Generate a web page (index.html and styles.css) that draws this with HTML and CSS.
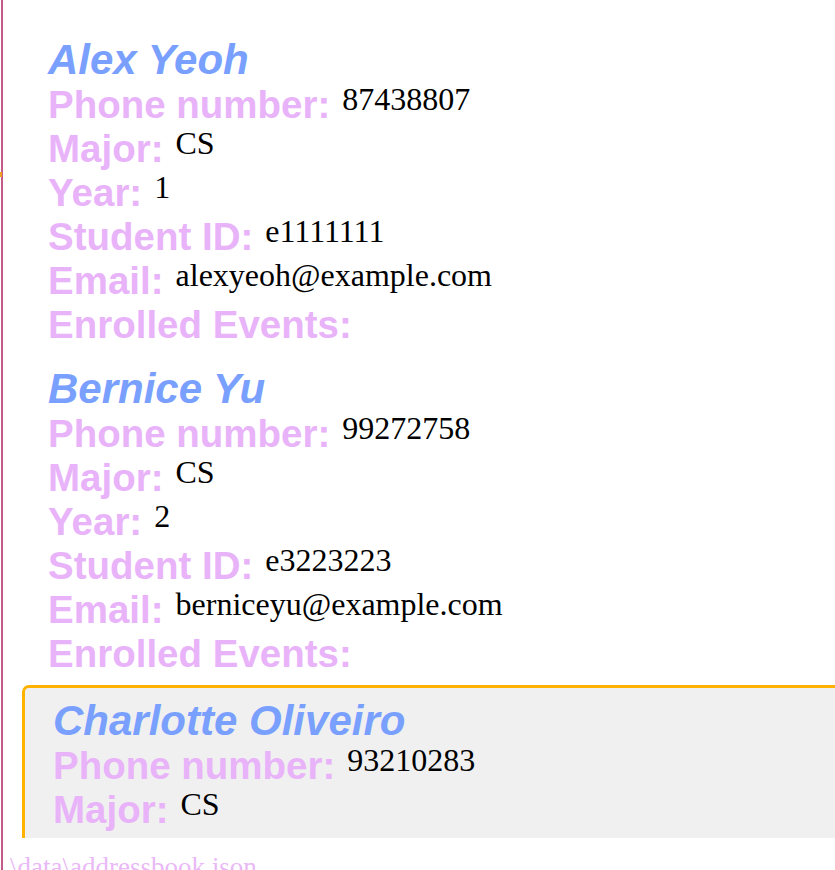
FILE: index.html
```html
<!DOCTYPE html>
<html lang="en">
<head>
<meta charset="utf-8">
<title>Address Book</title>
<link rel="stylesheet" href="styles.css">
</head>
<body>
<div class="app">
  <span class="edge-mark"></span>
  <div class="list">
    <div class="card">
      <div class="name">Alex Yeoh</div>
      <div class="row"><span class="label">Phone number:</span><span class="value">87438807</span></div>
      <div class="row"><span class="label">Major:</span><span class="value">CS</span></div>
      <div class="row"><span class="label">Year:</span><span class="value">1</span></div>
      <div class="row"><span class="label">Student ID:</span><span class="value">e1111111</span></div>
      <div class="row"><span class="label">Email:</span><span class="value">alexyeoh@example.com</span></div>
      <div class="row"><span class="label">Enrolled Events:</span></div>
    </div>
    <div class="card">
      <div class="name">Bernice Yu</div>
      <div class="row"><span class="label">Phone number:</span><span class="value">99272758</span></div>
      <div class="row"><span class="label">Major:</span><span class="value">CS</span></div>
      <div class="row"><span class="label">Year:</span><span class="value">2</span></div>
      <div class="row"><span class="label">Student ID:</span><span class="value">e3223223</span></div>
      <div class="row"><span class="label">Email:</span><span class="value">berniceyu@example.com</span></div>
      <div class="row"><span class="label">Enrolled Events:</span></div>
    </div>
    <div class="card selected">
      <div class="name">Charlotte Oliveiro</div>
      <div class="row"><span class="label">Phone number:</span><span class="value">93210283</span></div>
      <div class="row"><span class="label">Major:</span><span class="value">CS</span></div>
    </div>
  </div>
  <div class="status">\data\addressbook.json</div>
</div>
</body>
</html>
```

FILE: styles.css
```css
html, body {
  margin: 0;
  padding: 0;
  background: #ffffff;
  height: 870px;
  overflow: hidden;
}

.app {
  position: relative;
  margin-left: 1px;
  border-left: 2px solid #c45a8a;
  height: 870px;
  display: flex;
  flex-direction: column;
  background: #ffffff;
}

.edge-mark {
  position: absolute;
  left: -3px;
  top: 172px;
  width: 2px;
  height: 5px;
  background: #f0a020;
}

.list {
  height: 838px;
  overflow: hidden;
  padding-top: 27px;
  box-sizing: border-box;
  display: flex;
  flex-direction: column;
}

.card {
  margin-left: 19px;
  margin-right: -20px;
  padding: 10px 0 9px 26px;
  flex: none;
}

.card.selected {
  border: 3px solid #ffb300;
  border-radius: 7px;
  background: #f0f0f0;
  padding-left: 28px;
  padding-top: 10px;
}

.name {
  font-family: "Liberation Sans", Arial, sans-serif;
  font-weight: bold;
  font-style: italic;
  font-size: 42px;
  line-height: 46px;
  color: #79a0ff;
  white-space: nowrap;
}

.row {
  display: flex;
  align-items: flex-start;
  height: 44px;
  white-space: nowrap;
}

.label {
  font-family: "Liberation Sans", Arial, sans-serif;
  font-weight: bold;
  font-size: 38.5px;
  line-height: 44px;
  color: #e9b3f9;
}

.value {
  font-family: "Liberation Serif", "Times New Roman", serif;
  font-size: 32px;
  line-height: 1;
  color: #000000;
  margin-left: 12px;
}

.status {
  height: 32px;
  flex: none;
  padding-left: 7px;
  font-family: "Liberation Serif", "Times New Roman", serif;
  font-size: 27px;
  line-height: 58px;
  color: #eab8f6;
  white-space: nowrap;
  overflow: hidden;
  background: #ffffff;
}
```
